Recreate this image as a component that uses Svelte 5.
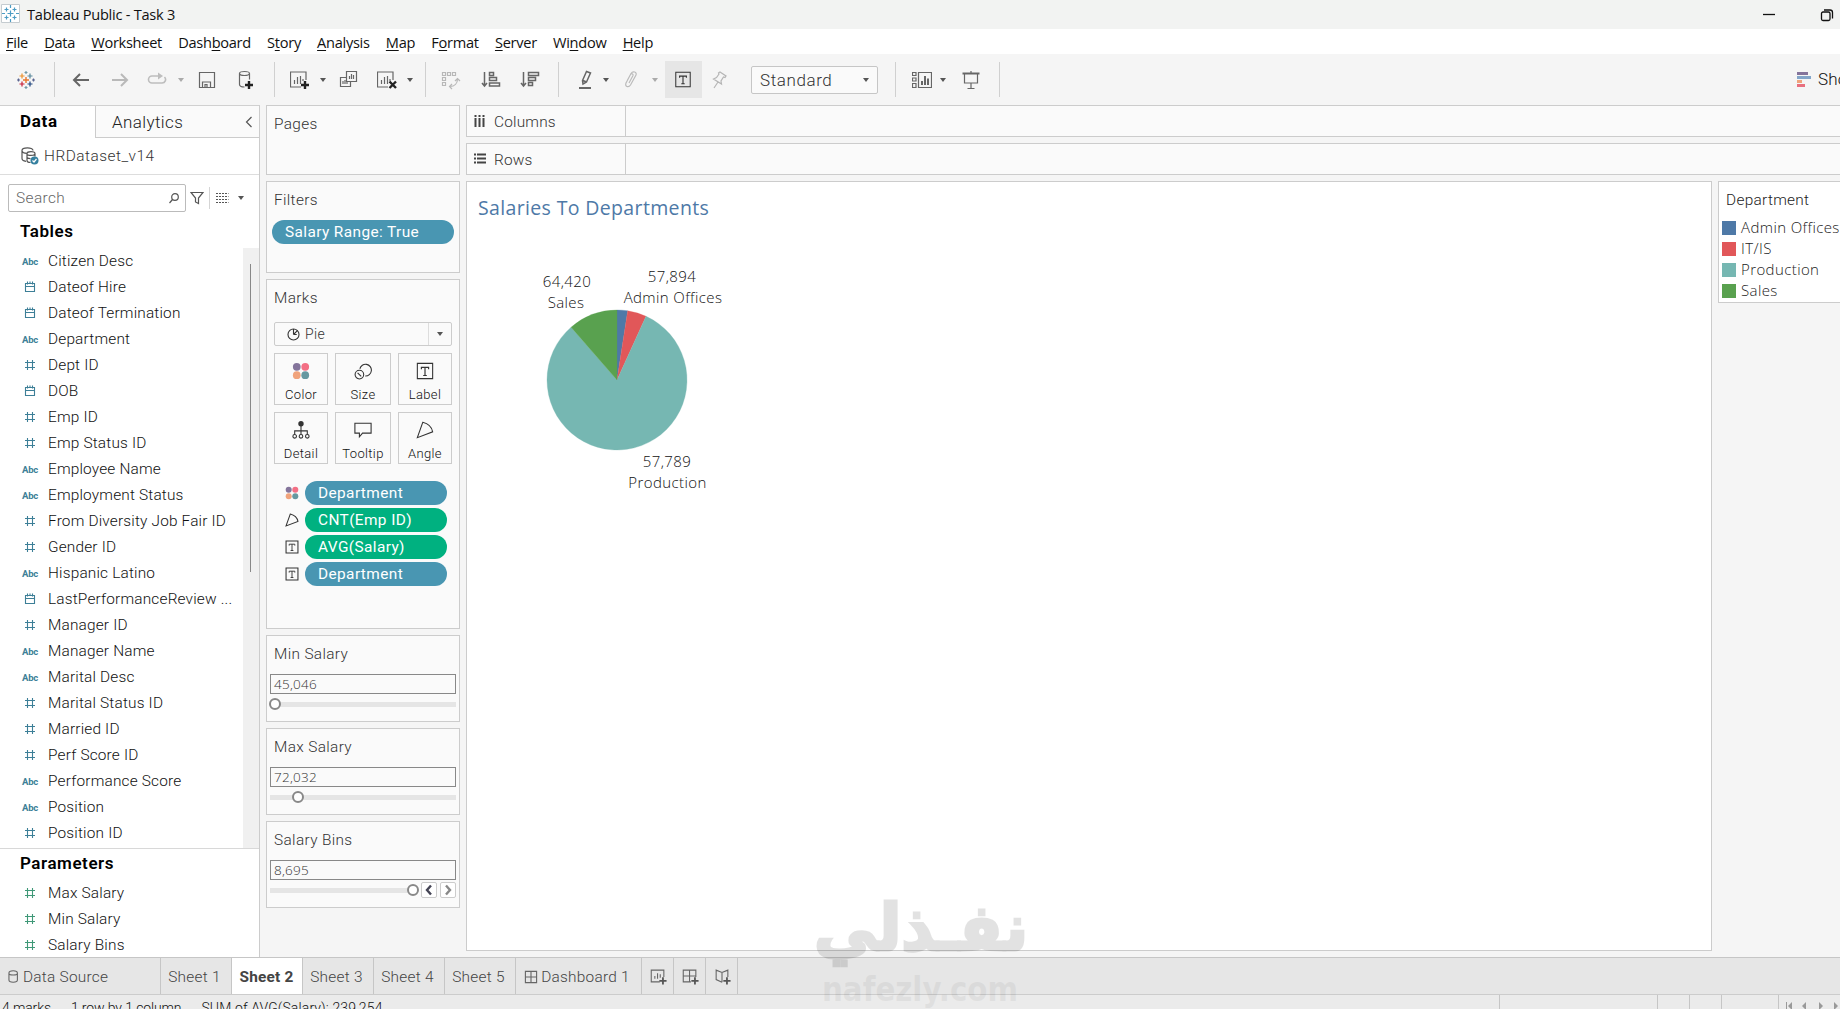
<script>
    const menus = [['', 'F', 'ile'], ['', 'D', 'ata'], ['', 'W', 'orksheet'], ['Dash', 'b', 'oard'], ['S', 't', 'ory'], ['', 'A', 'nalysis'],
        ['', 'M', 'ap'], ['F', 'o', 'rmat'], ['', 'S', 'erver'], ['Wi', 'n', 'dow'], ['', 'H', 'elp']]

    const toolsLeft = ['logo', 'sep', 'back', 'forward', 'redo', 'caret light', 'save', 'dbadd', 'sep', 'newsheet', 'caret', 'duplicate',
        'clear', 'caret', 'sep', 'swap', 'asc', 'desc', 'sep', 'pen', 'caret', 'clip', 'caret light']
    const toolsRight = ['sep', 'cards', 'caret', 'present', 'sep']

    const fields = [
        ['abc', 'Citizen Desc'], ['date', 'Dateof Hire'], ['date', 'Dateof Termination'], ['abc', 'Department'],
        ['num', 'Dept ID'], ['date', 'DOB'], ['num', 'Emp ID'], ['num', 'Emp Status ID'],
        ['abc', 'Employee Name'], ['abc', 'Employment Status'], ['num', 'From Diversity Job Fair ID'], ['num', 'Gender ID'],
        ['abc', 'Hispanic Latino'], ['date', 'LastPerformanceReview ...'], ['num', 'Manager ID'], ['abc', 'Manager Name'],
        ['abc', 'Marital Desc'], ['num', 'Marital Status ID'], ['num', 'Married ID'], ['num', 'Perf Score ID'],
        ['abc', 'Performance Score'], ['abc', 'Position'], ['num', 'Position ID']
    ]
    const parameters = ['Max Salary', 'Min Salary', 'Salary Bins']

    const markButtons = [['color', 'Color'], ['size', 'Size'], ['label', 'Label'], ['detail', 'Detail'], ['tooltip', 'Tooltip'], ['angle', 'Angle']]
    const pills = [['color', 'Department', 'blue'], ['angle', 'CNT(Emp ID)', 'green'], ['label', 'AVG(Salary)', 'green'], ['label', 'Department', 'blue']]

    const sliders = [
        { name: 'Min Salary', value: '45,046', pos: 0 },
        { name: 'Max Salary', value: '72,032', pos: 13.2 },
        { name: 'Salary Bins', value: '8,695', pos: 100, steps: true }
    ]

    // start and end angle in degrees, clockwise from the top
    const slices = [
        { name: 'Admin Offices', color: '#4e79a7', from: 0, to: 8.8 },
        { name: 'IT/IS', color: '#e15759', from: 8.8, to: 24.5 },
        { name: 'Production', color: '#76b7b2', from: 24.5, to: 319 },
        { name: 'Sales', color: '#59a14f', from: 319, to: 360 }
    ]

    function point(deg) {
        const a = deg * Math.PI / 180
        return (150 + 70 * Math.sin(a)).toFixed(2) + ' ' + (198 - 70 * Math.cos(a)).toFixed(2)
    }
    function slicePath(s) {
        return `M150 198L${point(s.from)}A70 70 0 ${s.to - s.from > 180 ? 1 : 0} 1 ${point(s.to)}Z`
    }

    const sheets = ['Sheet 1', 'Sheet 2', 'Sheet 3', 'Sheet 4', 'Sheet 5']
    let active = $state('Sheet 2')
</script>

{#snippet icon(name)}
    {#if name === 'sep'}
        <span class="sep"></span>
    {:else if name.startsWith('caret')}
        <svg class="ic {name}" width="8" height="20"><path d="M1 8h6l-3 4z" /></svg>
    {:else if name === 'num'}
        <svg class="ic" width="16" height="16"><path d="M5.500 3v10M10.500 3v10M3 5.500h10M3 10.500h10" /></svg>
    {:else if name === 'date'}
        <svg class="ic" width="16" height="16"><path d="M3.500 4.500h9v8h-9zM3 7.500h10M5.500 2.500v3M8 2.500v2M10.500 2.500v3" /></svg>
    {:else if name === 'color'}
        <svg class="ic" width="20" height="20" viewBox="0 0 20 20">
            <circle cx="5.300" cy="5.300" r="4.300" fill="#84749b" stroke="none" /><circle cx="14.700" cy="5.300" r="4.300" fill="#f36f84" stroke="none" />
            <circle cx="5.300" cy="14.700" r="4.300" fill="#f0a37c" stroke="none" /><circle cx="14.700" cy="14.700" r="4.300" fill="#6598a0" stroke="none" />
        </svg>
    {:else}
        <svg class="ic {name}" width="20" height="20" viewBox="0 0 20 20">
            {#if name === 'logo'}
                <path stroke="#e8762d" stroke-width="1.400" d="M10 7v6M7 10h6" />
                <path stroke="#eb912c" stroke-width="1.200" d="M6 3.500v5M3.500 6h5" />
                <path stroke="#59879b" stroke-width="1.200" d="M14 3.500v5M11.500 6h5" />
                <path stroke="#c72037" stroke-width="1.200" d="M6 11.500v5M3.500 14h5" />
                <path stroke="#1f447e" stroke-width="1.200" d="M14 11.500v5M11.500 14h5" />
                <path stroke="#7199a6" d="M10 1v3M8.500 2.500h3M10 16v3M8.500 17.500h3" />
                <path stroke="#5b6591" d="M2.500 8.500v3M1 10h3M17.500 8.500v3M16 10h3" />
            {:else if name === 'back'}
                <path stroke-width="2" d="M18 10H3M9 4l-6 6 6 6" />
            {:else if name === 'forward'}
                <path stroke="#b9b9b9" stroke-width="2" d="M2 10h15M11 4l6 6-6 6" />
            {:else if name === 'redo'}
                <path stroke="#bdbdbd" stroke-width="1.600" d="M12 6H5a3.500 3.500 0 0 0 0 7h10a3.500 3.500 0 0 0 2.500-6" />
                <path fill="#bdbdbd" stroke="none" d="M11 2.500l5 3.500-5 3.500z" />
            {:else if name === 'save'}
                <path d="M2.500 2.500h15v15h-15z" /><path d="M5.500 17v-5h8v5M8 17v-2.500h2V17" />
            {:else if name === 'dbadd'}
                <ellipse cx="8.500" cy="3.500" rx="5" ry="2" /><path d="M3.500 3.500v11c0 1.500 2 2.500 5 2.500M13.500 3.500v6" />
                <path class="plus" d="M13 11v8M9 15h8" />
            {:else if name === 'newsheet' || name === 'clear'}
                <path d="M11 17H.5V2h15.500v8M4.500 14v-4M7.500 14V7M10.500 14V6M13 11V9" />
                {#if name === 'clear'}
                    <path class="plus" d="M12.500 11.500l6.500 6.500M19 11.500l-6.500 6.500" />
                {:else}
                    <path class="plus" d="M15 11v8M11 15h8" />
                {/if}
            {:else if name === 'duplicate'}
                <path d="M7.500 1.500h10v10h-10zM10.500 9V6M12.500 9V4M14.500 9V5" /><path d="M7 7.500H1.500v9h10V12M4 14v-3M6 14v-4M8 14v-2" />
            {:else if name === 'swap'}
                <path stroke="#b8b8b8" d="M1.500 2.500h3v3h-3zM6.500 2.500h3v3h-3zM11.500 2.500h3v3h-3zM1.500 7.500h3v3h-3zM1.500 12.500h3v3h-3zM9 16.500c4.500 0 7.500-3 7.500-7.500M14 11l2.500-2.500L19 11M11 14l-2.500 2.500L11 19" />
            {:else if name === 'asc'}
                <path stroke-width="1.500" d="M3.500 2v13M1 13l2.500 3L6 13M8.500 2.500h4v3h-4zM8.500 7.500h7v3h-7zM8.500 13h10v3h-10z" />
            {:else if name === 'desc'}
                <path stroke-width="1.500" d="M3.500 2v13M1 13l2.500 3L6 13M8.500 2.500h10v3h-10zM8.500 7.500h7v3h-7zM8.500 12.500h4v3h-4z" />
            {:else if name === 'pen'}
                <path stroke-width="1.500" d="M11.500 1.500l4 1.500-4 9-3.500 2-.5-3.500zM8 10.500l3.500 1.500" /><path stroke-width="2" d="M4 18h12" />
            {:else if name === 'clip'}
                <path stroke="#bbb" d="M6 11l4-7.500c2-3 6-1.500 5 1.500l-5.500 10c-2 3-6 1.500-4.500-2l4.500-8.500c1-1.500 3-.5 2.500 1L8 13" />
            {:else if name === 'label'}
                <path d="M1.500 1.500h17v17h-17z" /><path stroke-width="1.300" d="M6 8V6h8v2M10 6v9M8 15h4" />
            {:else if name === 'pin'}
                <path stroke="#b5b5b5" d="M10 2l6 4-1 1.500-1.500-.5-2.500 4 .5 3-8-5 3-1.500 2.500-3.500-.5-1zM8 12l-4 6" />
            {:else if name === 'cards'}
                <path d="M6.500 2.500h13v15h-13zM.5 2.500h3.500v3H.5zM.5 8h3.500v3H.5zM.5 13.500h3.500v4H.5z" />
                <path stroke-width="2" d="M10 15v-4M13 15V6M16 15V8.500" />
            {:else if name === 'present'}
                <path d="M3.500 4v9h13V4M10 13v5M6.500 18.500h7M10 1v2" /><path stroke-width="2" d="M1.500 3.500h17" />
            {:else if name === 'size'}
                <path d="M6.500 7.500a6.500 6.500 0 1 1 6 8" /><circle cx="6" cy="14" r="4.800" /><path d="M4 12l4 4" />
            {:else if name === 'detail'}
                <circle cx="10" cy="3" r="3" fill="#333" stroke="none" /><path d="M10 5v10M3 15v-4h14v4" />
                <circle cx="3" cy="17" r="2" /><circle cx="10" cy="17" r="2" /><circle cx="17" cy="17" r="2" />
            {:else if name === 'tooltip'}
                <path d="M1 2.500h18v11H9.500l-3.500 4v-4H1z" />
            {:else if name === 'angle'}
                <path d="M7.500 1.500L1.500 18.500 18.500 12c-1-5-5-9-11-10.500z" />
            {:else if name === 'pie'}
                <circle cx="10" cy="10" r="8.500" /><path d="M10 10V1.500M10 10l6-6M10 10h5" />
            {:else if name === 'db'}
                <path d="M3 4.500v11c0 4.500 13 4.500 13 0v-11c0-4.500-13-4.500-13 0zM3 5.500c1 3 12 3 13 0" />
            {:else if name === 'grid'}
                <path d="M2 2h16v16H2zM10 2v16M2 10h16" />
            {:else if name === 'addsheet'}
                <path d="M12 16.500H2.500v-13h14V11M6.500 13v-3M9.500 13V7M12.500 12V8" /><path class="plus grey" d="M15.500 11.500v8M11.500 15.500h8" />
            {:else if name === 'adddash'}
                <path d="M11 16.500H2.500v-13h14V11M9.500 3.500v13M2.500 10h14" /><path class="plus grey" d="M15.500 11.500v8M11.500 15.500h8" />
            {:else if name === 'addstory'}
                <path d="M10 17l-6.500-3V3.500L10 6l6.500-2.500V11M10 6v11" /><path class="plus grey" d="M15.500 11.500v8M11.500 15.500h8" />
            {/if}
        </svg>
    {/if}
{/snippet}

<main>
    <header class="titlebar">
        <svg class="app-icon" width="20" height="20">
            <path fill="#fff" stroke="#c5ccd0" d="M.5.5h18v18H.5z" />
            <path stroke="#4c9cc4" stroke-width="1.200" d="M9.500 6.500v6M6.500 9.500h6M5.500 3.500v4M3.500 5.500h4M13.500 3.500v4M11.500 5.500h4M5.500 11.500v4M3.500 13.500h4M13.500 11.500v4M11.500 13.500h4M9.500 1v3M9.500 15v3M1 9.500h3M15 9.500h3" />
        </svg>
        <span>Tableau Public - Task 3</span>
        <svg class="win" width="76" height="20" viewBox="0 0 76 20">
            <path d="M0 9.500h12" /><rect x="58.500" y="7" width="8.500" height="8.500" rx="1.500" /><path d="M61 5h6a2.500 2.500 0 0 1 2.500 2.500v6" />
        </svg>
    </header>

    <nav class="menubar">
        {#each menus as m}
            <span>{m[0]}<u>{m[1]}</u>{m[2]}</span>
        {/each}
    </nav>

    <div class="toolbar">
        {#each toolsLeft as t}
            {@render icon(t)}
        {/each}
        <button class="toggle">{@render icon('label')}</button>
        {@render icon('pin')}
        <div class="fit"><span>Standard</span>{@render icon('caret')}</div>
        {#each toolsRight as t}
            {@render icon(t)}
        {/each}
        <div class="showme">
            <svg width="15" height="16"><path fill="#84749b" d="M0 0h11v3H0z" /><path fill="#83a5c9" d="M0 4h14v3H0z" /><path fill="#f0a37c" d="M0 8h5v3H0z" /><path fill="#e8707f" d="M0 12h8v3H0z" /></svg>
            <span>Show Me</span>
        </div>
    </div>

    <div class="workspace">
        <aside class="data-pane">
            <div class="pane-tabs">
                <b>Data</b>
                <div class="analytics">Analytics
                    <svg width="8" height="12"><path d="M6.500 1l-5 5 5 5" /></svg>
                </div>
            </div>
            <div class="dataset">
                <svg width="18" height="18">
                    <path d="M12 3.500C12 0 1 0 1 3.500v8c0 1.500 2 2.500 4 2.800M1 4c.5 2 3 2.300 5 2.300M14 6.500c0-2.500-8-2.500-8 0v7c0 1.200 1.500 2 3.500 2M6 7c0 2 8 2 8-.5v3M6 10.500c1 1 2 1.200 3.500 1.200" />
                    <circle cx="13.500" cy="13.500" r="4" fill="#35809f" stroke="none" /><path stroke="#fff" d="M11.500 13.500l1.500 1.500 2.500-3" />
                </svg>
                <span>HRDataset_v14</span>
            </div>
            <div class="search-row">
                <div class="search"><span>Search</span>
                    <svg width="10" height="11"><circle cx="6" cy="4" r="3.300" /><path d="M3.500 6.500L.5 10" /></svg>
                </div>
                <svg class="funnel" width="14" height="14"><path d="M1 1.500h12l-4.500 5.500v5.500l-3-1.500V7z" /></svg>
                <span class="split"></span>
                <svg class="view" width="13" height="10"><path stroke-dasharray="2 1" d="M0 .5h12.500M0 3.500h12.500M0 6.500h12.500M0 9.500h12.500" /></svg>
                {@render icon('caret')}
            </div>
            <h2>Tables</h2>
            <div class="fields">
                <ul>
                    {#each fields as f}
                        <li>
                            {#if f[0] === 'abc'}<i>Abc</i>{:else}{@render icon(f[0])}{/if}
                            <span>{f[1]}</span>
                        </li>
                    {/each}
                </ul>
                <div class="scroll"><div></div></div>
            </div>
            <h2 class="params-title">Parameters</h2>
            <ul class="params">
                {#each parameters as p}
                    <li>{@render icon('num')}<span>{p}</span></li>
                {/each}
            </ul>
        </aside>

        <section class="cards-col">
            <div class="card pages">Pages</div>
            <div class="card filters">
                Filters
                <div class="pill blue">Salary Range: True</div>
            </div>
            <div class="card marks">
                Marks
                <div class="mark-type">{@render icon('pie')}<span>Pie</span><div class="drop">{@render icon('caret')}</div></div>
                <div class="mark-buttons">
                    {#each markButtons as b}
                        <button>{@render icon(b[0])}<span>{b[1]}</span></button>
                    {/each}
                </div>
                {#each pills as p}
                    <div class="pill-row">{@render icon(p[0])}<div class="pill {p[2]}">{p[1]}</div></div>
                {/each}
            </div>
            {#each sliders as s}
                <div class="card slider">
                    {s.name}
                    <div class="value">{s.value}</div>
                    <div class="range">
                        <div class="track"><div class="rail"><div class="knob" style="left: {s.pos}%"></div></div></div>
                        {#if s.steps}
                            <svg class="step" width="16" height="16"><path d="M9 2.500L5 7l4 4.500" /></svg>
                            <svg class="step next" width="16" height="16"><path d="M5 2.500L9 7l-4 4.500" /></svg>
                        {/if}
                    </div>
                </div>
            {/each}
        </section>

        <section class="view-col">
            <div class="shelf">
                <div><svg width="11" height="13"><path d="M1.500 0v2M5.500 0v2M9.500 0v2M1.500 3v9M5.500 3v9M9.500 3v9" /></svg><span>Columns</span></div>
            </div>
            <div class="shelf">
                <div><svg width="12" height="12"><path d="M0 1.500h2M3 1.500h9M0 5.500h2M3 5.500h9M0 9.500h2M3 9.500h9" /></svg><span>Rows</span></div>
            </div>
            <div class="view-row">
                <div class="sheet">
                    <svg width="1245" height="769">
                        <text class="title" x="11" y="33" textLength="231">Salaries To Departments</text>
                        {#each slices as s}
                            <path d={slicePath(s)} fill={s.color} stroke={s.color} stroke-width=".3" />
                        {/each}
                        <g class="labels">
                            <text x="100" y="105">64,420</text><text x="99" y="126">Sales</text>
                            <text x="205" y="100">57,894</text><text x="206" y="121">Admin Offices</text>
                            <text x="200" y="285">57,789</text><text x="200.500" y="306">Production</text>
                        </g>
                    </svg>
                </div>
                <div class="legend">
                    <p>Department</p>
                    {#each slices as s}
                        <div><svg width="14" height="14"><rect width="14" height="14" fill={s.color} /></svg>{s.name}</div>
                    {/each}
                </div>
            </div>
        </section>
    </div>

    <footer>
        <div class="sheet-tabs">
            <div class="source">{@render icon('db')}Data Source</div>
            {#each sheets as s}
                <button class:active={s === active} onclick={() => active = s}>{s}</button>
            {/each}
            <div class="dash">{@render icon('grid')}Dashboard 1</div>
            <div class="add">{@render icon('addsheet')}</div>
            <div class="add">{@render icon('adddash')}</div>
            <div class="add">{@render icon('addstory')}</div>
        </div>
        <div class="status">
            <span>4 marks</span><span>1 row by 1 column</span><span class="sum">SUM of AVG(Salary): 239,254</span>
            <div class="cells"><i></i><i></i><i></i><i></i>
                <i><svg width="60" height="12"><path d="M7 2h1v8H7zM13 2v8l-4-4zM27 2v8l-4-4zM40 2v8l4-4zM55 2v8l4-4z" /></svg></i>
            </div>
        </div>
    </footer>

    <svg class="watermark" width="230" height="119" viewBox="805 890 230 119">
        <text class="ar" x="814" y="950" textLength="214" lengthAdjust="spacingAndGlyphs">نفـذلي</text>
        <text class="en" x="822" y="1001" textLength="196" lengthAdjust="spacingAndGlyphs">nafezly.com</text>
    </svg>
</main>

<style>
    :global(body) {
        overflow: hidden;
    }
    main {
        position: relative;
        display: flex;
        flex-direction: column;
        width: 1840px;
        height: 1009px;
        overflow: hidden;
        background: #f5f5f5;
        color: #222;
        font: 300 15.4px Roboto, sans-serif;
        letter-spacing: 0.18px;
    }
    main * {
        box-sizing: border-box;
    }
    main > * {
        flex: none;
    }
    svg {
        display: block;
        flex: none;
        fill: none;
    }
    ul {
        margin: 0;
        padding: 0;
        list-style: none;
    }
    button {
        margin: 0;
        padding: 0;
        border: 0;
        border-radius: 0;
        background: none;
        font: inherit;
        color: inherit;
        letter-spacing: inherit;
    }
    .ic {
        stroke: #666;
        stroke-width: 1.2;
    }
    .caret {
        fill: #555;
        stroke: none;
    }
    .caret.light {
        fill: #aaa;
    }
    .plus {
        stroke: #222;
        stroke-width: 2.4;
    }
    .plus.grey {
        stroke: #555;
        stroke-width: 2;
    }

    .titlebar {
        display: flex;
        align-items: center;
        height: 29px;
        padding-left: 1px;
        background: #f2f3f2;
        color: #111;
        font: 14.6px "Open Sans", sans-serif;
        letter-spacing: -0.26px;
    }
    .titlebar span {
        margin: 0 0 2px 6px;
    }
    .app-icon {
        margin-top: -2px;
    }
    .win {
        margin-left: auto;
        margin-right: 1px;
        stroke: #111;
        stroke-width: 1.3;
    }
    .menubar {
        display: flex;
        gap: 16.2px;
        height: 25px;
        padding-left: 6px;
        background: #fff;
        color: #111;
        font: 14.6px/26px "Open Sans", sans-serif;
        letter-spacing: -0.29px;
    }
    .menubar u {
        text-underline-offset: 2px;
        text-decoration-thickness: 1px;
    }

    .toolbar {
        display: grid;
        grid-template-columns: 38px 17px 39px 37px 30px 20px 39px 38px 16px 29px 20px 38px 29px 19px 16px 40px 39px 38px 17px 27px 19px 30px 14px 45px 41px 144px 17px 27px 22px 38px 798px auto;
        align-items: center;
        height: 51px;
        padding-left: 16px;
        overflow: hidden;
    }
    .sep {
        width: 1px;
        height: 35px;
        background: #d0d0d0;
    }
    .toggle {
        display: grid;
        place-items: center;
        width: 37px;
        height: 37px;
        padding-right: 2px;
        background: #e6e6e6;
    }
    .toggle .ic {
        width: 18px;
        height: 17px;
        stroke: #333;
    }
    .fit {
        display: flex;
        align-items: center;
        width: 127px;
        height: 28px;
        padding-left: 8px;
        border: 1px solid #c6c6c6;
        border-radius: 2px;
        background: #fafafa;
        color: #333;
        font-size: 17px;
        letter-spacing: 0.6px;
    }
    .fit .caret {
        margin-left: auto;
        margin-right: 7px;
    }
    .showme {
        display: flex;
        gap: 6px;
        align-items: center;
        font-size: 17px;
        color: #111;
        white-space: nowrap;
    }
    .showme span {
        margin-bottom: 1px;
    }

    .workspace {
        display: flex;
        height: 852px;
    }
    .data-pane {
        width: 260px;
        border-top: 1px solid #d0d0d0;
        border-right: 1px solid #ccc;
        background: #fff;
    }
    .pane-tabs {
        display: flex;
        height: 32px;
        font-size: 17px;
        line-height: 31px;
        color: #222;
    }
    .pane-tabs b {
        width: 95px;
        padding-left: 20px;
        font-weight: 700;
        letter-spacing: 0.7px;
        color: #000;
    }
    .analytics {
        display: flex;
        flex: 1;
        justify-content: space-between;
        align-items: center;
        padding: 1px 6px 0 16px;
        border-left: 1px solid #ccc;
        border-bottom: 1px solid #ccc;
        background: #fafafa;
        letter-spacing: 0.4px;
    }
    .analytics svg, .search svg, .funnel, .view, .dataset svg {
        stroke: #555;
        stroke-width: 1.2;
    }
    .dataset {
        display: flex;
        align-items: center;
        gap: 5px;
        height: 37px;
        padding: 0 0 1px 21px;
        border-bottom: 1px solid #ddd;
        color: #333;
        letter-spacing: 0.5px;
    }
    .search-row {
        display: flex;
        align-items: center;
        height: 46px;
        padding: 0 0 0 8px;
    }
    .search {
        display: flex;
        align-items: center;
        justify-content: space-between;
        width: 178px;
        height: 28px;
        padding: 0 6px 0 7px;
        border: 1px solid #bbb;
        border-radius: 2px;
        color: #666;
        letter-spacing: 0.4px;
    }
    .funnel {
        margin-left: 4px;
    }
    .split {
        width: 1px;
        height: 22px;
        margin: 0 6px 0 5px;
        background: #d5d5d5;
    }
    .view {
        margin-right: 8px;
    }
    h2 {
        height: 27px;
        margin: 0;
        padding-left: 20px;
        font-size: 17px;
        font-weight: 600;
        line-height: 20px;
        letter-spacing: 0.55px;
        color: #000;
    }
    .fields {
        display: flex;
        height: 601px;
        border-bottom: 1px solid #d8d8d8;
    }
    .fields ul {
        width: 243px;
    }
    li {
        display: flex;
        align-items: center;
        gap: 10px;
        height: 26px;
        padding-left: 22px;
        color: #111;
    }
    li .ic {
        stroke: #3d7f97;
        stroke-width: 1.1;
    }
    li i {
        width: 16px;
        color: #3d7f97;
        font: 700 9.5px Roboto, sans-serif;
        letter-spacing: -0.2px;
    }
    .scroll {
        width: 16px;
        padding: 16px 0 0 7px;
        background: #f0f0f0;
    }
    .scroll div {
        width: 1px;
        height: 308px;
        background: #888;
    }
    h2.params-title {
        height: 31px;
        line-height: 28px;
    }
    .params .ic {
        stroke: #3f9877;
    }

    .cards-col {
        display: flex;
        flex-direction: column;
        gap: 6px;
        width: 206px;
        padding: 0 6px;
    }
    .card {
        padding: 9px 7px 0;
        border: 1px solid #ccc;
        background: #fafafa;
        color: #333;
        letter-spacing: 0.35px;
    }
    .pages {
        height: 70px;
    }
    .filters {
        height: 92px;
    }
    .marks {
        height: 350px;
    }
    .pill {
        height: 24px;
        padding-left: 13px;
        border-radius: 12px;
        color: #fff;
        font-weight: 400;
        line-height: 25px;
        letter-spacing: 0.4px;
    }
    .blue {
        background: #4996b2;
    }
    .green {
        background: #00b180;
    }
    .filters .pill {
        margin: 11px -2px 0;
    }
    .mark-type {
        display: flex;
        align-items: center;
        height: 24px;
        margin-top: 15px;
        padding-left: 12px;
        border: 1px solid #ccc;
        border-radius: 2px;
        font-size: 14px;
    }
    .mark-type .pie {
        width: 13px;
        height: 13px;
        margin-right: 5px;
        stroke: #333;
        stroke-width: 1.7;
    }
    .drop {
        margin-left: auto;
        padding: 1px 7px;
        border-left: 1px solid #ddd;
    }
    .mark-buttons {
        display: grid;
        grid-template-columns: 54px 56px 54px;
        gap: 7px;
        margin: 7px 0 17px;
    }
    .mark-buttons button {
        display: flex;
        flex-direction: column;
        align-items: center;
        height: 52px;
        padding-top: 8px;
        border: 1px solid #ccc;
        font-size: 13px;
        color: #111;
    }
    .mark-buttons .ic {
        width: 18px;
        height: 18px;
        margin-bottom: 7px;
        stroke: #333;
    }
    .pill-row {
        display: flex;
        align-items: center;
        gap: 10px;
        height: 24px;
        margin-bottom: 3px;
        padding: 0 4px 0 11px;
    }
    .pill-row .ic {
        width: 14px;
        height: 14px;
        stroke: #333;
        stroke-width: 1.5;
    }
    .pill-row .pill {
        flex: 1;
        margin-left: -4px;
        margin-right: 1px;
    }
    .slider {
        height: 87px;
    }
    .value {
        height: 20px;
        margin: 11px -4px 0;
        padding-left: 3px;
        border: 1px solid #888;
        font: 300 13.5px/19px "Open Sans", sans-serif;
        letter-spacing: 0.25px;
    }
    .range {
        display: flex;
        gap: 3px;
        height: 20px;
        margin: 0 -4px;
        align-items: center;
    }
    .track {
        flex: 1;
        height: 5px;
        padding: 0 5px;
        background: #e5e5e5;
    }
    .rail {
        position: relative;
    }
    .knob {
        position: absolute;
        top: -4px;
        width: 12px;
        height: 12px;
        margin-left: -6px;
        border: 2px solid #888;
        border-radius: 50%;
        background: #fff;
    }
    .step {
        border: 1px solid #ccc;
        border-radius: 2px;
        background: #fff;
        stroke: #445;
        stroke-width: 2.4;
    }
    .next {
        stroke: #888;
    }

    .view-col {
        display: flex;
        flex: 1;
        flex-direction: column;
        gap: 6px;
    }
    .shelf {
        height: 32px;
        border: 1px solid #ccc;
        border-right: 0;
        background: #fafafa;
        color: #333;
    }
    .shelf div {
        display: flex;
        align-items: center;
        gap: 8px;
        width: 159px;
        height: 30px;
        padding-left: 7px;
        border-right: 1px solid #ccc;
        letter-spacing: 0.2px;
    }
    .shelf span {
        margin-top: 2px;
    }
    .shelf svg {
        width: 12px;
        stroke: #444;
        stroke-width: 2;
    }
    .view-row {
        display: flex;
        gap: 6px;
    }
    .sheet {
        width: 1246px;
        height: 770px;
        border: 1px solid #ccc;
        background: #fff;
        overflow: hidden;
    }
    .title {
        fill: #4e79a7;
        font: 400 19.5px "Open Sans", sans-serif;
    }
    .labels {
        fill: #111;
        font: 300 15px "Open Sans", sans-serif;
        letter-spacing: 0.4px;
        text-anchor: middle;
    }
    .legend {
        width: 130px;
        height: 122px;
        padding: 9px 0 0 3px;
        border: 1px solid #ccc;
        background: #fff;
        white-space: nowrap;
        font: 300 15px/21px "Open Sans", sans-serif;
        letter-spacing: 0.4px;
        color: #222;
    }
    .legend p {
        height: 26px;
        margin: 0;
        padding-left: 4px;
        font: 300 15.4px Roboto, sans-serif;
        letter-spacing: 0.3px;
    }
    .legend div {
        display: flex;
        align-items: center;
        gap: 5px;
        height: 21px;
    }

    .sheet-tabs {
        display: flex;
        height: 38px;
        border-top: 1px solid #c6c6c6;
        border-bottom: 1px solid #ccc;
        background: #e6e6e6;
        color: #444;
        letter-spacing: 0.25px;
    }
    .sheet-tabs > * {
        display: flex;
        align-items: center;
        justify-content: center;
        width: 71px;
        height: 36px;
        padding-right: 3px;
        padding-top: 1px;
        border-right: 1px solid #c6c6c6;
    }
    .sheet-tabs .source {
        justify-content: flex-start;
        gap: 3px;
        width: 161px;
        padding-left: 7px;
    }
    .source .ic {
        width: 13px;
        height: 13px;
        stroke-width: 1.7;
    }
    .sheet-tabs .active {
        padding-right: 1px;
        background: #fff;
        font-weight: 700;
        letter-spacing: 0.2px;
        color: #444;
    }
    .sheet-tabs .dash {
        gap: 3px;
        width: 126px;
    }
    .dash .ic {
        width: 14px;
        height: 14px;
        stroke-width: 1.6;
    }
    .sheet-tabs .add {
        width: 32px;
        padding: 0;
    }
    .add .ic {
        width: 18px;
        height: 18px;
    }
    .status {
        display: flex;
        gap: 20px;
        height: 24px;
        padding-left: 2px;
        background: #ebebeb;
        font-size: 14px;
        letter-spacing: -0.12px;
        line-height: 26px;
        color: #111;
    }
    .sum {
        letter-spacing: 0.12px;
    }
    .cells {
        display: flex;
        margin-left: auto;
    }
    .cells i {
        width: 32px;
        border-left: 1px solid #c6c6c6;
    }
    .cells i:first-child {
        width: 158px;
    }
    .cells i:nth-child(4) {
        width: 57px;
    }
    .cells i:last-child {
        width: 62px;
    }
    .cells svg {
        margin-top: 5px;
        fill: #999;
    }

    .watermark {
        position: absolute;
        left: 805px;
        top: 890px;
        opacity: 0.11;
    }
    .watermark text {
        fill: #000;
        font-family: "DejaVu Sans", sans-serif;
        font-weight: 700;
        letter-spacing: 0;
    }
    .watermark .ar {
        font-size: 64px;
        stroke: #000;
        stroke-width: 3;
    }
    .watermark .en {
        font-size: 33px;
        fill-opacity: 0.45;
    }
</style>
